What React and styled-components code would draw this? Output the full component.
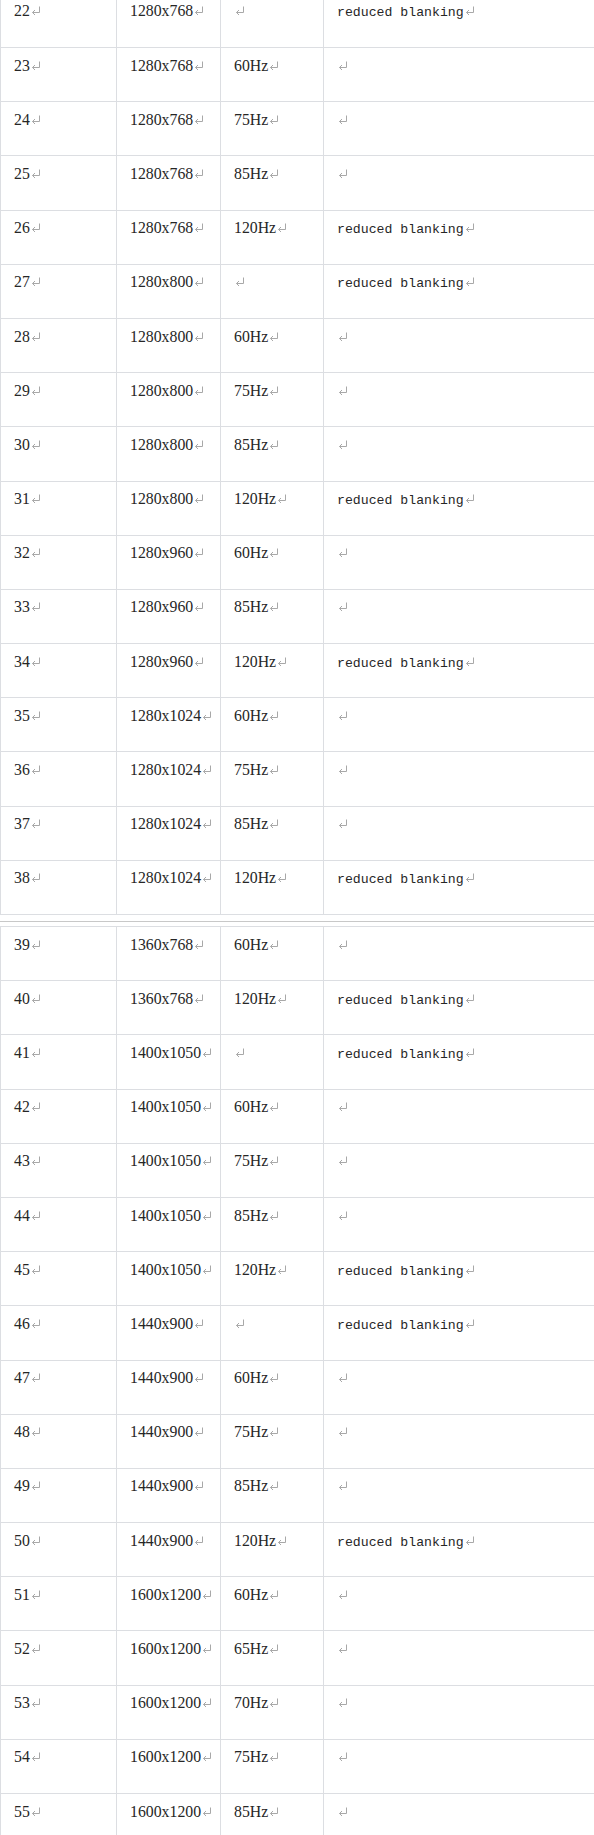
import React from 'react';
import styled, { createGlobalStyle } from 'styled-components';

const GlobalStyle = createGlobalStyle`
  html,
  body {
    margin: 0;
    padding: 0;
    overflow: hidden;
    background: #fff;
  }
`;

const Page = styled.div`
  width: 594px;
  margin-top: -7.19px;
  font-family: 'Liberation Serif', 'Times New Roman', serif;
  font-size: 15.8px;
  color: #262626;
`;

const Table = styled.div`
  border-bottom: 1px solid #dcdee2;
`;

const Row = styled.div`
  display: grid;
  grid-template-columns: 116px 104px 103px 1fr;
  height: 54.19px;
  box-sizing: border-box;
  border-top: 1px solid #dcdee2;
`;

const Cell = styled.div`
  border-left: 1px solid #dcdee2;
  padding: 8.6px 0 0 13px;
  line-height: 18px;
  white-space: nowrap;
`;

const Mono = styled.span`
  font-family: 'Liberation Mono', 'Courier New', monospace;
  font-size: 13.2px;
`;

const PageBreak = styled.div`
  height: 1px;
  margin: 6px 0 4px;
  background: #c8c8c8;
`;

const Mark = styled.svg`
  display: inline-block;
  width: 10px;
  height: 9px;
  margin-left: 1px;
  vertical-align: 1px;
`;

function ReturnMark() {
  return (
    <Mark viewBox="0 0 10 9" fill="none" stroke="#a8a8a8" strokeWidth="1">
      <path d="M8.5 0.5 V6.5 H1.5" />
      <path d="M4 4 L1.5 6.5 L4 9" />
    </Mark>
  );
}

const firstPart = [
  ['22', '1280x768', '', true],
  ['23', '1280x768', '60Hz', false],
  ['24', '1280x768', '75Hz', false],
  ['25', '1280x768', '85Hz', false],
  ['26', '1280x768', '120Hz', true],
  ['27', '1280x800', '', true],
  ['28', '1280x800', '60Hz', false],
  ['29', '1280x800', '75Hz', false],
  ['30', '1280x800', '85Hz', false],
  ['31', '1280x800', '120Hz', true],
  ['32', '1280x960', '60Hz', false],
  ['33', '1280x960', '85Hz', false],
  ['34', '1280x960', '120Hz', true],
  ['35', '1280x1024', '60Hz', false],
  ['36', '1280x1024', '75Hz', false],
  ['37', '1280x1024', '85Hz', false],
  ['38', '1280x1024', '120Hz', true],
];

const secondPart = [
  ['39', '1360x768', '60Hz', false],
  ['40', '1360x768', '120Hz', true],
  ['41', '1400x1050', '', true],
  ['42', '1400x1050', '60Hz', false],
  ['43', '1400x1050', '75Hz', false],
  ['44', '1400x1050', '85Hz', false],
  ['45', '1400x1050', '120Hz', true],
  ['46', '1440x900', '', true],
  ['47', '1440x900', '60Hz', false],
  ['48', '1440x900', '75Hz', false],
  ['49', '1440x900', '85Hz', false],
  ['50', '1440x900', '120Hz', true],
  ['51', '1600x1200', '60Hz', false],
  ['52', '1600x1200', '65Hz', false],
  ['53', '1600x1200', '70Hz', false],
  ['54', '1600x1200', '75Hz', false],
  ['55', '1600x1200', '85Hz', false],
];

function ModeRow({ mode }) {
  const [id, res, rate, reduced] = mode;
  return (
    <Row>
      <Cell>
        {id}
        <ReturnMark />
      </Cell>
      <Cell>
        {res}
        <ReturnMark />
      </Cell>
      <Cell>
        {rate}
        <ReturnMark />
      </Cell>
      <Cell>
        {reduced && <Mono>reduced blanking</Mono>}
        <ReturnMark />
      </Cell>
    </Row>
  );
}

export default function App() {
  return (
    <>
      <GlobalStyle />
      <Page>
        <Table>
          {firstPart.map(m => (
            <ModeRow key={m[0]} mode={m} />
          ))}
        </Table>
        <PageBreak />
        <Table>
          {secondPart.map(m => (
            <ModeRow key={m[0]} mode={m} />
          ))}
        </Table>
      </Page>
    </>
  );
}
